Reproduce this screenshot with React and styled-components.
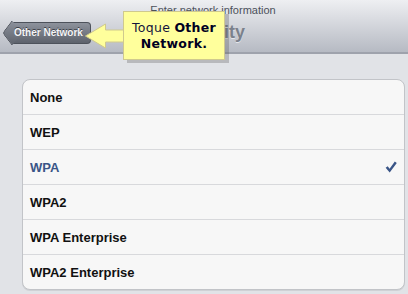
import React from 'react';
import styled, { createGlobalStyle } from 'styled-components';

const GlobalStyle = createGlobalStyle`
  html, body {
    margin: 0;
    padding: 0;
    background: #e1e3e7;
  }
`;

const Page = styled.div`
  position: relative;
  width: 408px;
  height: 294px;
  overflow: hidden;
  background: #e1e3e7;
  font-family: 'Liberation Sans', Arial, sans-serif;
`;

const Header = styled.header`
  height: 52px;
  background: linear-gradient(#eeeff2, #b6bac3);
  border-bottom: 2px solid #9ea2ac;
  display: flex;
  flex-direction: column;
`;

const Prompt = styled.div`
  padding: 3px 0 0 18px;
  height: 14px;
  line-height: 14px;
  font-size: 11px;
  color: #4c515b;
  text-align: center;
`;

const NavRow = styled.div`
  flex: 1;
  display: grid;
  grid-template-columns: 1fr auto 1fr;
  align-items: center;
  padding: 0 0 4px 3px;
`;

const BackButton = styled.div`
  position: relative;
  justify-self: start;
  height: 20px;
  margin-left: 9px;
  padding: 0 7px 0 2px;
  display: flex;
  align-items: center;
  background: linear-gradient(#8d929c, #5d626c);
  border: 1px solid #4d525b;
  border-left: none;
  border-radius: 0 4px 4px 0;
  color: #f4f5f7;
  font-size: 10px;
  font-weight: bold;
  text-shadow: 0 -1px 0 #3c4048;

  &::before {
    content: '';
    position: absolute;
    left: -8px;
    top: 2px;
    width: 15px;
    height: 15px;
    transform: rotate(45deg) skew(8deg, 8deg);
    background: linear-gradient(135deg, #8d929c, #5d626c);
    border-left: 1px solid #4d525b;
    border-bottom: 1px solid #4d525b;
    border-radius: 0 0 0 3px;
  }

  span {
    position: relative;
  }
`;

const Title = styled.h1`
  margin: 0;
  padding-left: 8px;
  font-size: 18px;
  font-weight: bold;
  color: #7b818c;
  text-shadow: 0 1px 0 #e4e6ea;
`;

const Body = styled.main`
  padding: 25px 3px 0 22px;
`;

const Card = styled.ul`
  list-style: none;
  margin: 0;
  padding: 0;
  background: #f7f7f7;
  border: 1px solid #c2c4c8;
  border-radius: 8px;
  box-shadow: 0 1px 0 #cfd1d5;
  overflow: hidden;
`;

const Row = styled.li`
  height: 34px;
  display: flex;
  align-items: center;
  justify-content: space-between;
  padding: 0 7px 0 7px;
  font-size: 13px;
  font-weight: bold;
  color: ${p => (p.$selected ? '#3a5587' : '#111')};
  & + & {
    border-top: 1px solid #d8d9dc;
  }
`;

const Callout = styled.div`
  position: absolute;
  left: 85px;
  top: 11px;
  display: flex;
  align-items: center;
`;

const CalloutBox = styled.div`
  width: 100px;
  height: 47px;
  margin-left: -1px;
  display: flex;
  flex-direction: column;
  justify-content: center;
  align-items: center;
  background: #ffff9c;
  border: 1px solid #cfc98e;
  box-shadow: 4px 3px 0 rgba(90, 90, 90, 0.3);
  font-family: 'DejaVu Sans', Verdana, sans-serif;
  font-size: 12.5px;
  letter-spacing: 0.3px;
  line-height: 16px;
  color: #14143c;

  b {
    color: #000022;
  }
`;

const Check = () => (
  <svg width="12" height="12" viewBox="0 0 11 11">
    <path d="M0.6 6.2 L2.5 4.8 L4.2 7.2 L9 0.5 L10.8 1.8 L4.3 10.5 Z" fill="#3a5587" />
  </svg>
);

const CalloutArrow = () => (
  <svg width="39" height="26" viewBox="0 0 39 26">
    <path
      d="M0.5 13 L20.5 1 L20.5 7 L39 7 L39 19 L20.5 19 L20.5 25 Z"
      fill="#ffff9c"
      stroke="#cfc98e"
      strokeWidth="1"
    />
  </svg>
);

const options = ['None', 'WEP', 'WPA', 'WPA2', 'WPA Enterprise', 'WPA2 Enterprise'];

export default function App() {
  return (
    <Page>
      <GlobalStyle />
      <Header>
        <Prompt>Enter network information</Prompt>
        <NavRow>
          <BackButton><span>Other Network</span></BackButton>
          <Title>Security</Title>
          <div />
        </NavRow>
      </Header>
      <Body>
        <Card>
          {options.map(o => (
            <Row key={o} $selected={o === 'WPA'}>
              {o}
              {o === 'WPA' && <Check />}
            </Row>
          ))}
        </Card>
      </Body>
      <Callout>
        <CalloutArrow />
        <CalloutBox>
          <div>Toque <b>Other</b></div>
          <div><b>Network.</b></div>
        </CalloutBox>
      </Callout>
    </Page>
  );
}
